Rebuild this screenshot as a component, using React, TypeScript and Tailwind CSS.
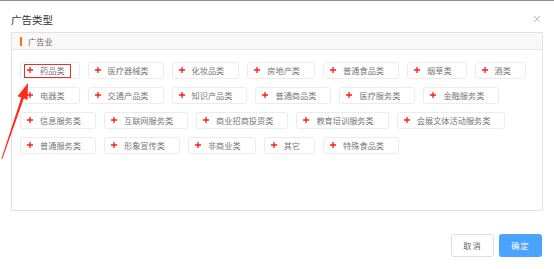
import React from 'react';

const rows: string[] = [
  '药品类', '医疗器械类', '化妆品类', '房地产类', '普通食品类', '烟草类', '酒类',
  '电器类', '交通产品类', '知识产品类', '普通商品类', '医疗服务类', '金融服务类',
  '信息服务类', '互联网服务类', '商业招商投资类', '教育培训服务类', '会展文体活动服务类',
  '普通服务类', '形象宣传类', '非商业类', '其它', '特殊食品类',
];

function Plus() {
  return (
    <svg width="6" height="6" viewBox="0 0 6 6" className="mb-[2px] shrink-0">
      <path d="M3 0v6M0 3h6" stroke="#ff1a1a" strokeWidth="1.3" />
    </svg>
  );
}

function Tag({ label, picked }: { label: string; picked?: boolean }) {
  return (
    <div className="relative flex h-[17px] items-center rounded-[3px] border border-[#ececec] bg-white pl-[6px] pr-[14px]">
      <Plus />
      <span className="ml-[7px] whitespace-nowrap text-[8.2px] leading-none text-[#777]">{label}</span>
      {picked && (
        <span className="absolute left-[3px] top-[1px] h-[14px] w-[47px] border-[1.5px] border-[#e6312a]" />
      )}
    </div>
  );
}

export default function App() {
  return (
    <div className="relative h-[269px] w-[554px] overflow-hidden border-t border-[#8c8c8c] bg-white font-['Noto_Sans_CJK_SC',sans-serif]">
      <div className="flex items-start justify-between pl-[11px] pr-[14px] pt-[12px]">
        <h1 className="text-[10.5px] leading-[14px] text-[#333]">广告类型</h1>
        <svg width="6" height="6" viewBox="0 0 6 6" className="mt-[3px]">
          <path d="M0 0l6 6M6 0L0 6" stroke="#b5b5b5" strokeWidth="0.9" />
        </svg>
      </div>

      <section className="mx-[11px] mt-[5px] h-[179px] border border-[#e2e2e2]">
        <div className="flex h-[17px] items-center gap-[6px] border-b border-[#e6e6e6] bg-[#f8f8f8] pl-[8px]">
          <span className="h-[9px] w-[2px] bg-[#ff6a13]" />
          <span className="text-[8.2px] leading-none text-[#666]">广告业</span>
        </div>
        <div className="flex flex-wrap gap-x-[8px] gap-y-[8px] px-[8px] pt-[12px]">
          {rows.map((r, i) => (
            <Tag key={r} label={r} picked={i === 0} />
          ))}
        </div>
      </section>

      <div className="mt-[23px] flex justify-end gap-[5px] pr-[12px]">
        <button className="h-[23px] w-[43px] rounded-[3px] border border-[#dcdfe6] bg-white text-[8.2px] tracking-[1px] text-[#666]">
          取消
        </button>
        <button className="h-[23px] w-[43px] rounded-[3px] bg-[#4aa3ff] text-[8.2px] tracking-[1px] text-white">
          确定
        </button>
      </div>

      <svg className="pointer-events-none absolute inset-0" width="554" height="269">
        <polygon
          points="28,82 27.5,99 23.8,97.4 2.3,158 1.4,157.8 21.4,96.6 17.6,95.2"
          fill="#ff2a1a"
        />
      </svg>
    </div>
  );
}
